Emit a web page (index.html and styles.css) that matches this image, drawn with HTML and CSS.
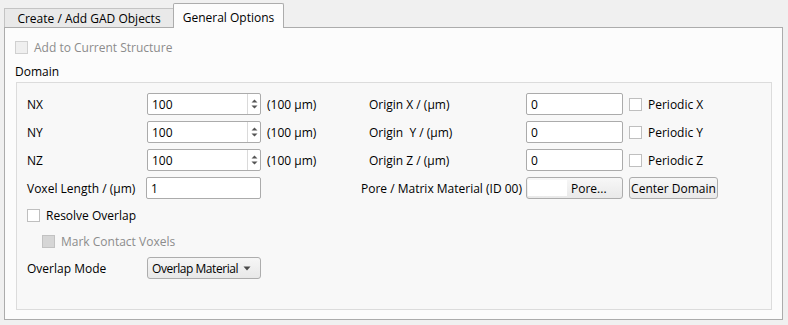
FILE: index.html
```html
<!DOCTYPE html>
<html>
<head>
<meta charset="utf-8">
<link rel="stylesheet" href="styles.css">
</head>
<body>
<div class="window">
  <div class="tabbar">
    <div class="tab">Create / Add GAD Objects</div>
    <div class="tab active">General Options</div>
  </div>
  <div class="pane">
    <div class="check disabled top-check"><span class="box"></span><span>Add to Current Structure</span></div>
    <div class="group-title">Domain</div>
    <div class="group">
      <div class="grid">
        <div class="lbl">NX</div>
        <div class="spin"><span class="val">100</span><span class="arrows"><svg width="7" height="12" viewBox="0 0 7 12"><path d="M3.5 1.5 L6.5 4.5 L0.5 4.5 Z M0.5 7.5 L6.5 7.5 L3.5 10.5 Z" fill="#555"/></svg></span></div>
        <div class="unit">(100 µm)</div>
        <div class="lbl origin">Origin X / (µm)</div>
        <div class="edit">0</div>
        <div class="check periodic"><span class="box"></span><span>Periodic X</span></div>

        <div class="lbl">NY</div>
        <div class="spin"><span class="val">100</span><span class="arrows"><svg width="7" height="12" viewBox="0 0 7 12"><path d="M3.5 1.5 L6.5 4.5 L0.5 4.5 Z M0.5 7.5 L6.5 7.5 L3.5 10.5 Z" fill="#555"/></svg></span></div>
        <div class="unit">(100 µm)</div>
        <div class="lbl origin">Origin&nbsp;&nbsp;Y / (µm)</div>
        <div class="edit">0</div>
        <div class="check periodic"><span class="box"></span><span>Periodic Y</span></div>

        <div class="lbl">NZ</div>
        <div class="spin"><span class="val">100</span><span class="arrows"><svg width="7" height="12" viewBox="0 0 7 12"><path d="M3.5 1.5 L6.5 4.5 L0.5 4.5 Z M0.5 7.5 L6.5 7.5 L3.5 10.5 Z" fill="#555"/></svg></span></div>
        <div class="unit">(100 µm)</div>
        <div class="lbl origin">Origin Z / (µm)</div>
        <div class="edit">0</div>
        <div class="check periodic"><span class="box"></span><span>Periodic Z</span></div>

        <div class="lbl">Voxel Length / (µm)</div>
        <div class="edit voxel">1</div>
        <div class="unit"></div>
        <div class="lbl pore-lbl">Pore / Matrix Material (ID 00)</div>
        <div class="button pore"><span class="swatch"></span><span class="pore-text">Pore...</span></div>
        <div class="cell-btn"><div class="button center">Center Domain</div></div>
      </div>
      <div class="check resolve"><span class="box"></span><span>Resolve Overlap</span></div>
      <div class="check disabled mark"><span class="box dark"></span><span>Mark Contact Voxels</span></div>
      <div class="overlap-row">
        <div class="lbl overlap-lbl">Overlap Mode</div>
        <div class="combo"><span class="combo-text">Overlap Material</span><svg width="8" height="5" viewBox="0 0 8 5"><path d="M0.5 0.5 L7.5 0.5 L4 4.5 Z" fill="#4a4a4a"/></svg></div>
      </div>
    </div>
  </div>
</div>
</body>
</html>
```
FILE: styles.css
```css
* { box-sizing: border-box; }
html, body {
  margin: 0;
  padding: 0;
  background: #f0f0f0;
  width: 788px;
  height: 325px;
  overflow: hidden;
}
body {
  font-family: "Open Sans", "Noto Sans", "Liberation Sans", sans-serif;
  font-size: 12px;
  color: #000;
}
.window {
  padding: 0 5px 0 4px;
}
.tabbar {
  display: flex;
  align-items: flex-end;
  height: 27px;
  position: relative;
  z-index: 2;
}
.tab {
  height: 19px;
  width: 170px;
  background: #e9e9e9;
  border: 1px solid #c4c4c4;
  border-bottom: none;
  display: flex;
  align-items: center;
  justify-content: center;
  padding-top: 1px;
  white-space: nowrap;
}
.tab.active {
  height: 25px;
  width: 111px;
  margin-left: -1px;
  margin-bottom: -1px;
  background: #fcfcfc;
  border-color: #acacac;
  border-top-left-radius: 2px;
  border-top-right-radius: 2px;
  padding-top: 3px;
}
.pane {
  height: 293px;
  border: 1px solid #acacac;
  background: #fcfcfc;
  padding: 12px 0 0 10px;
  position: relative;
  z-index: 1;
}
.check {
  display: flex;
  align-items: center;
  gap: 6px;
  height: 22px;
  white-space: nowrap;
}
.box {
  width: 13px;
  height: 13px;
  border: 1px solid #bfbfbf;
  background: #fff;
  flex: none;
}
.disabled { color: #8c8c8c; }
.disabled .box { background: #efefef; border-color: #d0d0d0; }
.disabled .box.dark { background: #d6d6d6; border-color: #c2c2c2; }
.top-check { height: 15px; }
.group-title {
  margin-top: 9px;
  height: 15px;
  line-height: 15px;
}
.group {
  margin-top: 3px;
  margin-left: 1px;
  width: 756px;
  height: 228px;
  border: 1px solid #dcdcdc;
  background: #f8f8f8;
  padding: 10px 0 0 10px;
}
.grid {
  display: grid;
  grid-template-columns: 120px 114px 94px 171px 97px auto;
  grid-auto-rows: 22px;
  row-gap: 6px;
  align-items: center;
}
.lbl { white-space: nowrap; }
.origin { padding-left: 14px; }
.pore-lbl { padding-left: 6px; }
.unit { padding-left: 6px; white-space: nowrap; }
.spin, .edit {
  height: 22px;
  border: 1px solid #ababab;
  border-radius: 2px;
  background: #fff;
  display: flex;
  align-items: center;
}
.spin .val { flex: 1; padding-left: 4px; }
.arrows {
  width: 13px;
  height: 100%;
  border-left: 1px solid #dadada;
  display: flex;
  align-items: center;
  justify-content: center;
}
.edit { padding-left: 4px; }
.edit.voxel { margin-left: -1px; }
.periodic { margin-left: 6px; }
.button {
  height: 22px;
  border: 1px solid #adadad;
  border-radius: 3px;
  background: linear-gradient(#f7f7f7, #e9e9e9);
  display: flex;
  align-items: center;
  white-space: nowrap;
}
.pore { padding: 2px 0 2px 1px; }
.swatch {
  width: 39px;
  height: 100%;
  background: #fff;
  flex: none;
}
.pore-text { padding-left: 4px; }
.cell-btn { padding-left: 6px; }
.center {
  width: 89px;
  justify-content: center;
}
.resolve { margin-top: 5px; }
.mark { margin-top: 4px; margin-left: 15px; }
.overlap-row {
  display: flex;
  align-items: center;
  margin-top: 5px;
  height: 22px;
}
.overlap-lbl { width: 120px; }
.combo {
  width: 114px;
  height: 22px;
  border: 1px solid #adadad;
  border-radius: 3px;
  background: linear-gradient(#f6f6f6, #e8e8e8);
  display: flex;
  align-items: center;
  justify-content: space-between;
  padding: 0 9px 0 4px;
  white-space: nowrap;
}
.combo-text { letter-spacing: -0.45px; }
```
